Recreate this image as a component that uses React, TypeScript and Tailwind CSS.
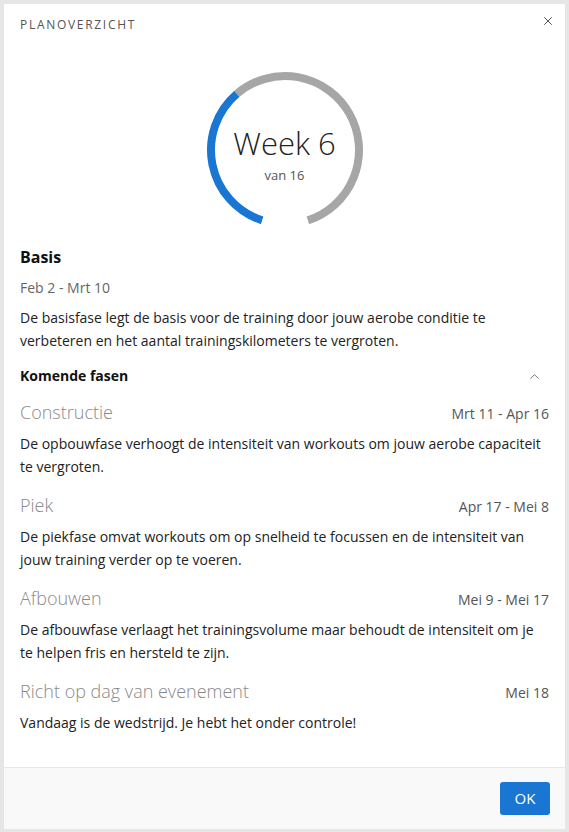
import { ChevronUp, X } from 'lucide-react';

interface Phase {
  name: string;
  dates: string;
  description: string;
}

const phases: Phase[] = [
  {
    name: 'Constructie',
    dates: 'Mrt 11 - Apr 16',
    description: 'De opbouwfase verhoogt de intensiteit van workouts om jouw aerobe capaciteit te vergroten.',
  },
  {
    name: 'Piek',
    dates: 'Apr 17 - Mei 8',
    description:
      'De piekfase omvat workouts om op snelheid te focussen en de intensiteit van jouw training verder op te voeren.',
  },
  {
    name: 'Afbouwen',
    dates: 'Mei 9 - Mei 17',
    description:
      'De afbouwfase verlaagt het trainingsvolume maar behoudt de intensiteit om je te helpen fris en hersteld te zijn.',
  },
  {
    name: 'Richt op dag van evenement',
    dates: 'Mei 18',
    description: 'Vandaag is de wedstrijd. Je hebt het onder controle!',
  },
];

function WeekGauge({ week, total }: { week: number; total: number }) {
  const c = 80;
  const r = 74;
  const gap = 18;
  const span = 360 - gap * 2;
  const point = (deg: number) => {
    const rad = (deg * Math.PI) / 180;
    return `${(c - r * Math.sin(rad)).toFixed(2)} ${(c + r * Math.cos(rad)).toFixed(2)}`;
  };
  const mid = gap + (span * week) / total;
  const end = 360 - gap;
  const blueLarge = mid - gap > 180 ? 1 : 0;
  const grayLarge = end - mid > 180 ? 1 : 0;

  return (
    <div className="relative h-[160px] w-[160px]">
      <svg width="160" height="160" viewBox="0 0 160 160" className="absolute inset-0">
        <path
          d={`M ${point(gap)} A ${r} ${r} 0 ${blueLarge} 1 ${point(mid)}`}
          fill="none"
          stroke="#1976d2"
          strokeWidth={8}
        />
        <path
          d={`M ${point(mid)} A ${r} ${r} 0 ${grayLarge} 1 ${point(end)}`}
          fill="none"
          stroke="#a6a6a6"
          strokeWidth={8}
        />
      </svg>
      <div className="absolute inset-0 flex flex-col items-center justify-center">
        <div className="mt-[6px] text-[31px] font-light leading-[40px] text-[#222]">Week {week}</div>
        <div className="mt-[3px] text-[13px] leading-[18px] text-[#555]">van {total}</div>
      </div>
    </div>
  );
}

export default function App() {
  return (
    <div className="h-[832px] w-[569px] bg-[#e6e6e6] px-[4px] pt-[4px] pb-[3px] font-['Open_Sans',sans-serif]">
      <div className="flex h-full flex-col bg-white">
        <div className="flex items-start justify-between pl-[16px] pr-[10px] pt-[13px]">
          <div className="text-[12px] leading-[16px] tracking-[1.7px] text-[#555]">PLANOVERZICHT</div>
          <button type="button" className="mt-[-3px] text-[#555]" aria-label="Sluiten">
            <X size={14} strokeWidth={1.7} />
          </button>
        </div>

        <div className="mt-[37px] flex justify-center">
          <WeekGauge week={6} total={16} />
        </div>

        <div className="px-[16px]">
          <h2 className="mt-[14px] text-[16px] font-bold leading-[26px] text-[#111]">Basis</h2>
          <div className="mt-[7px] text-[14px] leading-[22px] text-[#666]">Feb 2 - Mrt 10</div>
          <p className="mt-[7px] text-[14px] leading-[23px] text-[#222]">
            De basisfase legt de basis voor de training door jouw aerobe conditie te verbeteren en het aantal
            trainingskilometers te vergroten.
          </p>

          <div className="mt-[12px] flex items-center justify-between">
            <h3 className="text-[14px] font-bold leading-[24px] text-[#111]">Komende fasen</h3>
            <ChevronUp size={15} strokeWidth={1.6} className="mr-[7px] text-[#777]" />
          </div>

          <div className="mt-[12px] flex flex-col gap-[15px]">
            {phases.map((phase) => (
              <div key={phase.name}>
                <div className="flex items-baseline justify-between">
                  <span className="text-[18px] font-light leading-[24px] text-[#8a8a8a]">{phase.name}</span>
                  <span className="text-[14px] leading-[20px] text-[#555]">{phase.dates}</span>
                </div>
                <p className="mt-[8px] text-[14px] leading-[23px] text-[#222]">{phase.description}</p>
              </div>
            ))}
          </div>
        </div>

        <div className="mt-auto flex justify-end border-t border-[#e8e8e8] bg-[#f9f9f9] px-[15px] py-[14px]">
          <button
            type="button"
            className="h-[33px] w-[50px] rounded-[3px] bg-[#1976d2] text-[15px] text-white"
          >
            OK
          </button>
        </div>
      </div>
    </div>
  );
}
